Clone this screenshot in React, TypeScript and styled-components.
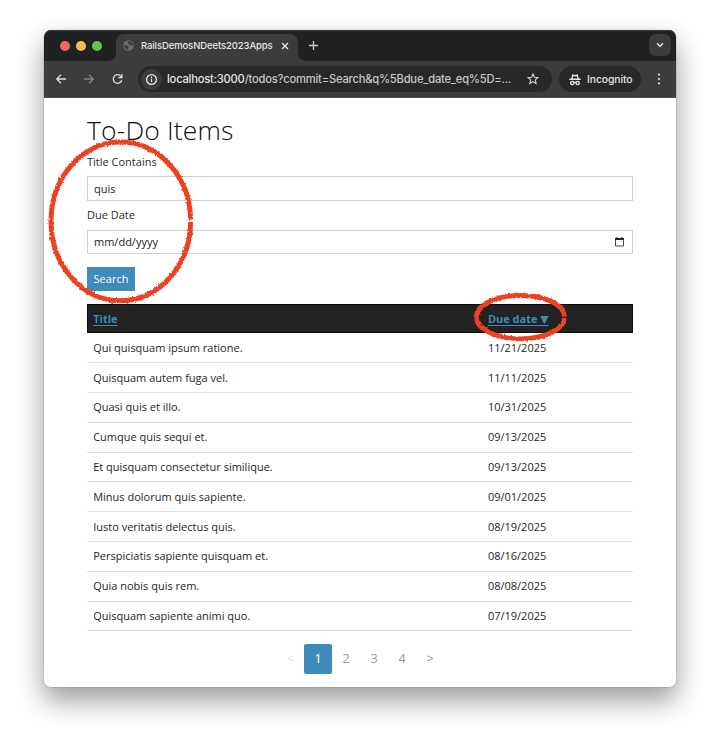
import React from 'react';
import styled, { createGlobalStyle } from 'styled-components';

const GlobalStyle = createGlobalStyle`
  * { box-sizing: border-box; }
  html, body { margin: 0; background: #fff; }
  body { width: 720px; height: 745px; overflow: hidden; font-family: 'Open Sans', sans-serif; color: #222; }
`;

const Stage = styled.div`
  position: relative;
  width: 720px;
  height: 745px;
  padding: 30px 44px 0;
`;

const Window = styled.div`
  width: 632px;
  height: 657px;
  border-radius: 7px;
  overflow: hidden;
  background: #fff;
  box-shadow: 0 0 0 1px rgba(0, 0, 0, 0.08), 0 13px 27px 1px rgba(0, 0, 0, 0.38);
`;

const TabStrip = styled.div`
  display: flex;
  align-items: flex-start;
  height: 31px;
  background: #202221;
  border-top: 1px solid #3c403e;
`;

const Lights = styled.div`
  display: flex;
  gap: 6px;
  width: 72px;
  padding: 10px 0 0 16px;
`;

const Light = styled.span<{ $color: string }>`
  width: 10px;
  height: 10px;
  border-radius: 50%;
  background: ${p => p.$color};
`;

const Tab = styled.div`
  position: relative;
  display: flex;
  align-items: center;
  width: 182px;
  height: 27px;
  margin-top: 3px;
  padding: 0 9px 4px 7px;
  border-radius: 8px 8px 0 0;
  background: #3c3c3c;
  &::before, &::after {
    content: '';
    position: absolute;
    bottom: 0;
    width: 7px;
    height: 7px;
  }
  &::before { left: -7px; background: radial-gradient(circle at 0 0, transparent 6.5px, #3c3c3c 7px); }
  &::after { right: -7px; background: radial-gradient(circle at 100% 0, transparent 6.5px, #3c3c3c 7px); }
`;

const TabTitle = styled.span`
  flex: 1;
  margin-left: 7px;
  font: 500 9.5px/14px Inter, sans-serif;
  letter-spacing: -0.1px;
  color: #e6e6e6;
  white-space: nowrap;
`;

const NewTab = styled.div`
  display: flex;
  margin: 10px auto 0 11px;
`;

const TabSearch = styled.div`
  display: flex;
  align-items: center;
  justify-content: center;
  width: 22px;
  height: 22px;
  margin: 3px 5px 0 0;
  border-radius: 7px;
  background: #3c3c3c;
`;

const Toolbar = styled.div`
  display: flex;
  align-items: center;
  height: 37px;
  padding: 0 11px;
  background: #3c3c3c;
  border-bottom: 1px solid #4a4a4a;
`;

const NavButtons = styled.div`
  display: flex;
  gap: 16px;
  width: 83px;
`;

const AddressBar = styled.div`
  display: flex;
  align-items: center;
  width: 414px;
  height: 26px;
  padding: 0 13px 0 3px;
  border-radius: 13px;
  background: #282828;
`;

const SiteInfo = styled.span`
  display: flex;
  align-items: center;
  justify-content: center;
  width: 21px;
  height: 21px;
  border-radius: 50%;
  background: #3c3c3c;
`;

const Url = styled.span`
  flex: 1;
  margin-left: 5px;
  font: 500 11.2px/18px Inter, sans-serif;
  letter-spacing: -0.22px;
  color: #c7c7c7;
  white-space: nowrap;
  b { font-weight: 500; color: #e6e6e6; }
`;

const Incognito = styled.div`
  display: flex;
  align-items: center;
  gap: 6px;
  width: 82px;
  height: 26px;
  margin-left: 7px;
  padding: 1px 0 0 10px;
  border-radius: 13px;
  background: #282828;
  font: 500 10.4px/16px Inter, sans-serif;
  letter-spacing: -0.1px;
  color: #e3e3e3;
`;

const MenuDots = styled.div`
  display: flex;
  margin-left: 16px;
`;

const Page = styled.main`
  padding: 15px 43px 0;
`;

const Heading = styled.h1`
  height: 40px;
  margin: 0;
  font: 300 26.5px/34px 'Open Sans', sans-serif;
  letter-spacing: 0.15px;
  color: #111;
`;

const Label = styled.label`
  display: block;
  height: 23.4px;
  font-size: 11px;
  line-height: 18px;
  color: #2b2b2b;
`;

const Field = styled.div`
  display: flex;
  align-items: center;
  justify-content: space-between;
  height: 24.5px;
  margin-bottom: 5.5px;
  padding: 0 8.5px 0 6px;
  border: 1px solid #d0d0d0;
  font-size: 11px;
  line-height: 18px;
  color: #222;
`;

const SearchButton = styled.button`
  display: block;
  width: 48px;
  height: 24.5px;
  margin: 12.5px 0 12.7px;
  padding: 0;
  border: 0;
  background: #3f8bba;
  color: #fff;
  font: 400 11px/24px 'Open Sans', sans-serif;
`;

const Columns = styled.div`
  display: grid;
  grid-template-columns: 394.7px 1fr;
  align-items: center;
  padding: 0 6.2px;
`;

const HeaderRow = styled(Columns)`
  height: 29.5px;
  border: 1px solid #0c0c0c;
  padding: 0 5.2px;
  background: #222;
`;

const SortLink = styled.a`
  justify-self: start;
  font: 700 11px/16px 'Open Sans', 'DejaVu Sans', sans-serif;
  color: #3f8bba;
  text-decoration: underline;
  text-decoration-thickness: 1px;
  text-underline-offset: 1.5px;
  white-space: nowrap;
`;

const Row = styled(Columns)`
  height: 29.8px;
  border-bottom: 1px solid #dee0e2;
  font-size: 11px;
  line-height: 18px;
  color: #262626;
`;

const Pager = styled.nav`
  display: flex;
  justify-content: center;
  gap: 0.5px;
  margin-top: 12.6px;
`;

const PageLink = styled.a<{ $active?: boolean; $muted?: boolean }>`
  display: flex;
  align-items: center;
  justify-content: center;
  width: 27.5px;
  height: 29.5px;
  border-radius: 2px;
  font-size: 12.6px;
  background: ${p => (p.$active ? '#3f8bba' : 'transparent')};
  color: ${p => (p.$active ? '#fff' : p.$muted ? '#e2e2e2' : '#999')};
`;

const Markup = styled.svg`
  position: absolute;
  inset: 0;
  pointer-events: none;
`;

const items: [string, string][] = [
  ['Qui quisquam ipsum ratione.', '11/21/2025'],
  ['Quisquam autem fuga vel.', '11/11/2025'],
  ['Quasi quis et illo.', '10/31/2025'],
  ['Cumque quis sequi et.', '09/13/2025'],
  ['Et quisquam consectetur similique.', '09/13/2025'],
  ['Minus dolorum quis sapiente.', '09/01/2025'],
  ['Iusto veritatis delectus quis.', '08/19/2025'],
  ['Perspiciatis sapiente quisquam et.', '08/16/2025'],
  ['Quia nobis quis rem.', '08/08/2025'],
  ['Quisquam sapiente animi quo.', '07/19/2025'],
];

const stroke = (color: string, width = 1.3) => ({
  fill: 'none',
  stroke: color,
  strokeWidth: width,
});

const Globe = () => (
  <svg width="11" height="11" viewBox="0 0 11 11">
    <circle cx="5.5" cy="5.5" r="5.3" fill="#686c71" />
    <path d="M1.2 4.5 3.3 5.6 4.5 5.7 5.8 7.2 5.1 8.1 4.8 9.8C2.7 9.5 1 7.5 1.2 4.5ZM5.2 1.2 4.4 2.5 5.5 3.5 6.2 4.8 8.2 5 9.8 6.2C10.3 3.8 8.3 1.2 5.2 1.2Z" fill="#3c3c3c" />
  </svg>
);

const Arrows = () => (
  <NavButtons>
    <svg width="12" height="12" viewBox="0 0 12 12" {...stroke('#dedede')}><path d="M11 6H2M6 1.7 1.7 6 6 10.3" /></svg>
    <svg width="12" height="12" viewBox="0 0 12 12" {...stroke('#858585')}><path d="M1 6h9M6 1.7 10.3 6 6 10.3" /></svg>
    <svg width="12" height="12" viewBox="0 0 12 12" {...stroke('#dedede')}>
      <path d="M10.7 7.2A4.3 4.3 0 1 1 10 3.4L10.6 4.2" />
      <path d="M10.9 1v3.7H7.3" />
    </svg>
  </NavButtons>
);

const Info = () => (
  <svg width="13" height="13" viewBox="0 0 13 13" {...stroke('#e6e6e6')}>
    <circle cx="6.5" cy="6.5" r="4.9" />
    <path d="M6.5 5.8v3.4M6.5 3.6v1.3" />
  </svg>
);

const Star = () => (
  <svg width="12" height="12" viewBox="0 0 12 12" {...stroke('#d6d6d6', 1.1)}>
    <path d="M6 .9 7.4 4.2 11 4.5 8.3 6.9 9.1 10.5 6 8.6 2.9 10.5 3.7 6.9 1 4.5 4.6 4.2Z" />
  </svg>
);

const Spy = () => (
  <svg width="12" height="12" viewBox="0 0 12 12" {...stroke('#e3e3e3', 1.4)}>
    <path d="M3.1 4.7 3.7 1.2 6 1.7 8.3 1.2 8.9 4.7M.3 5.3h11.4" />
    <circle cx="3.3" cy="9" r="1.65" />
    <circle cx="8.7" cy="9" r="1.65" />
    <path d="M4.9 8.7Q6 8 7.1 8.7" />
  </svg>
);

const Calendar = () => (
  <svg width="9" height="10" viewBox="0 0 9 10">
    <path d="M.5 1.5h8v7.5h-8Z" fill="none" stroke="#333" strokeWidth=".9" />
    <path d="M0 1h9v1.9H0ZM1.5 0h1v1h-1ZM6.5 0h1v1h-1Z" fill="#222" />
  </svg>
);

// Hand-drawn crayon rings laid over the page.
const Rings = () => (
  <Markup width="720" height="745" viewBox="0 0 720 745">
    <defs>
      <filter id="crayon" x="-10%" y="-10%" width="120%" height="120%">
        <feTurbulence type="fractalNoise" baseFrequency="0.45" numOctaves="2" seed="4" result="grain" />
        <feDisplacementMap in="SourceGraphic" in2="grain" scale="3" xChannelSelector="R" yChannelSelector="G" />
      </filter>
    </defs>
    <g fill="none" stroke="#ed4224" filter="url(#crayon)">
      <path d="M190.6 219.5C190 176 158 142 120.5 142S51 177 51 221 82 300.8 120.5 300.8 190.6 265 190.6 222" strokeWidth="5" />
      <path d="M564.5 316.5C564 304.5 545 295.5 520.5 295.5S476.5 305 476.5 317 496 338.8 520.5 338.8 564.5 329 564.5 317.8" strokeWidth="4.8" />
    </g>
  </Markup>
);

export default function App() {
  return (
    <Stage>
      <GlobalStyle />
      <Window>
        <TabStrip>
          <Lights>
            <Light $color="#ed6a5e" />
            <Light $color="#f5bf4f" />
            <Light $color="#61c554" />
          </Lights>
          <Tab>
            <Globe />
            <TabTitle>RailsDemosNDeets2023Apps</TabTitle>
            <svg width="8" height="8" viewBox="0 0 8 8" {...stroke('#e6e6e6', 1.4)}><path d="m1 1 6 6M7 1 1 7" /></svg>
          </Tab>
          <NewTab>
            <svg width="9" height="9" viewBox="0 0 9 9" {...stroke('#cfcfcf', 1.3)}><path d="M4.5 0v9M0 4.5h9" /></svg>
          </NewTab>
          <TabSearch>
            <svg width="8" height="6" viewBox="0 0 8 6" {...stroke('#e6e6e6', 1.5)}><path d="m1 1.2 3 3 3-3" /></svg>
          </TabSearch>
        </TabStrip>
        <Toolbar>
          <Arrows />
          <AddressBar>
            <SiteInfo><Info /></SiteInfo>
            <Url><b>localhost:3000</b>/todos?commit=Search&amp;q%5Bdue_date_eq%5D=...</Url>
            <Star />
          </AddressBar>
          <Incognito><Spy />Incognito</Incognito>
          <MenuDots>
            <svg width="4" height="12" viewBox="0 0 4 12" fill="#dcdcdc">
              <circle cx="2" cy="1.6" r="1.1" /><circle cx="2" cy="6" r="1.1" /><circle cx="2" cy="10.4" r="1.1" />
            </svg>
          </MenuDots>
        </Toolbar>
        <Page>
          <Heading>To-Do Items</Heading>
          <Label>Title Contains</Label>
          <Field>quis</Field>
          <Label>Due Date</Label>
          <Field>mm/dd/yyyy<Calendar /></Field>
          <SearchButton>Search</SearchButton>
          <HeaderRow>
            <SortLink>Title</SortLink>
            <SortLink>Due date ▼</SortLink>
          </HeaderRow>
          {items.map(([title, date]) => (
            <Row key={title}><span>{title}</span><span>{date}</span></Row>
          ))}
          <Pager>
            <PageLink $muted>&lt;</PageLink>
            <PageLink $active>1</PageLink>
            <PageLink>2</PageLink>
            <PageLink>3</PageLink>
            <PageLink>4</PageLink>
            <PageLink>&gt;</PageLink>
          </Pager>
        </Page>
      </Window>
      <Rings />
    </Stage>
  );
}
